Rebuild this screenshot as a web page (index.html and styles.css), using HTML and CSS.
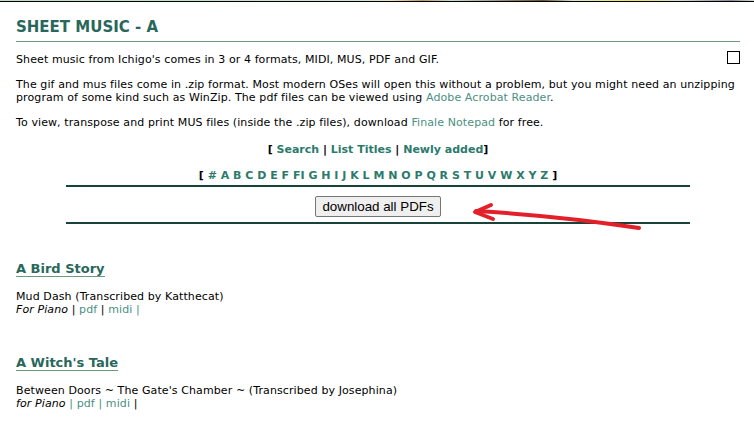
FILE: index.html
```html
<!DOCTYPE html>
<html>
<head>
<meta charset="utf-8">
<link rel="stylesheet" href="styles.css">
</head>
<body>
<div class="banner"></div>
<div class="page">
  <h1 class="title">SHEET MUSIC - A</h1>
  <p class="intro"><input type="checkbox" class="check">Sheet music from Ichigo's comes in 3 or 4 formats, MIDI, MUS, PDF and GIF.</p>
  <p>The gif and mus files come in .zip format. Most modern OSes will open this without a problem, but you might need an unzipping program of some kind such as WinZip. The pdf files can be viewed using <a class="plain" href="#">Adobe Acrobat Reader</a>.</p>
  <p>To view, transpose and print MUS files (inside the .zip files), download <a class="plain" href="#">Finale Notepad</a> for free.</p>
  <div class="nav">[ <a href="#">Search</a> | <a href="#">List Titles</a> | <a href="#">Newly added</a>]</div>
  <div class="alpha">[ <a href="#">#</a> <a href="#">A</a> <a href="#">B</a> <a href="#">C</a> <a href="#">D</a> <a href="#">E</a> <a href="#">F</a> <a href="#">FI</a> <a href="#">G</a> <a href="#">H</a> <a href="#">I</a> <a href="#">J</a> <a href="#">K</a> <a href="#">L</a> <a href="#">M</a> <a href="#">N</a> <a href="#">O</a> <a href="#">P</a> <a href="#">Q</a> <a href="#">R</a> <a href="#">S</a> <a href="#">T</a> <a href="#">U</a> <a href="#">V</a> <a href="#">W</a> <a href="#">X</a> <a href="#">Y</a> <a href="#">Z</a> ]</div>
  <div class="dlbox"><button class="dl">download all PDFs</button></div>

  <div class="song">
    <h2 class="stitle">A Bird Story</h2>
    <div class="sdesc">Mud Dash (Transcribed by Katthecat)<br><i>For Piano</i> | <a class="plain" href="#">pdf</a> | <a class="plain" href="#">midi</a> <span class="lbar">|</span></div>
  </div>
  <div class="song">
    <h2 class="stitle">A Witch's Tale</h2>
    <div class="sdesc">Between Doors ~ The Gate's Chamber ~ (Transcribed by Josephina)<br><i>for Piano</i> <span class="lbar">|</span> <a class="plain" href="#">pdf</a> <span class="lbar">|</span> <a class="plain" href="#">midi</a> |</div>
  </div>
</div>
<svg class="arrow" width="754" height="428" viewBox="0 0 754 428">
  <g fill="none" stroke="#e3202a" stroke-width="4" stroke-linecap="round" stroke-linejoin="round">
    <path d="M639 228 Q560 216 476 211"/>
    <path d="M491 205 L475 212 L493 219"/>
  </g>
</svg>
</body>
</html>
```
FILE: styles.css
```css
html, body {
  margin: 0;
  padding: 0;
  background: #fff;
}
body {
  font-family: "DejaVu Sans", Verdana, sans-serif;
  font-size: 11px;
  line-height: 13px;
  color: #000;
  position: relative;
  width: 754px;
  height: 428px;
  overflow: hidden;
}
.banner {
  height: 1px;
  border-bottom: 1px solid #000;
  background: linear-gradient(90deg, #bfe0c8 0%, #c9e6d0 48%, #e8e0c0 52%, #c09860 56%, #c8e0d0 60%, #6a5030 72%, #d8e8d0 76%, #f0e060 84%, #d0e0d0 90%, #8a8a9a 97%, #d0e0d0 100%);
}
.page {
  margin: 0 14px 0 16px;
}
p {
  margin: 12px 0 0 0;
  letter-spacing: 0.1px;
}
.title {
  margin: 0;
  padding-top: 16px;
  padding-bottom: 5px;
  border-bottom: 1px solid #6b9b78;
  font-size: 15px;
  line-height: 18px;
  font-weight: bold;
  color: #2a675b;
}
.intro {
  margin-top: 11px;
}
.check {
  float: right;
  appearance: none;
  -webkit-appearance: none;
  box-sizing: border-box;
  width: 13px;
  height: 13px;
  margin: -2px 0 0 0;
  border: 1px solid #000;
  border-radius: 0;
  background: #fff;
}
a {
  color: #2c7a6c;
  text-decoration: none;
}
a.plain {
  color: #4c8f83;
  font-weight: normal;
}
.nav {
  margin-top: 14px;
  text-align: center;
  font-weight: bold;
}
.alpha {
  margin-top: 13px;
  text-align: center;
  font-weight: bold;
}
.dlbox {
  width: 624px;
  margin: 3px auto 0;
  border-top: 2px solid #17433a;
  border-bottom: 2px solid #17433a;
  display: flex;
  justify-content: center;
  padding: 9px 0 5px;
}
.dl {
  font-family: "Liberation Sans", Arial, sans-serif;
  font-size: 13.33px;
  height: 21px;
  padding: 0 6px;
  border: 1px solid #767676;
  border-radius: 2px;
  background: #efefef;
  color: #000;
}
.song {
  margin-top: 38px;
}
.song + .song {
  margin-top: 40px;
}
.stitle {
  display: inline-block;
  margin: 0;
  font-size: 13px;
  line-height: 14px;
  font-weight: bold;
  color: #2a675b;
  border-bottom: 1px solid #6b9b78;
}
.sdesc {
  margin-top: 13px;
  letter-spacing: 0.1px;
}
.lbar {
  color: #4c8f83;
}
.arrow {
  position: absolute;
  left: 0;
  top: 0;
  pointer-events: none;
}
```
